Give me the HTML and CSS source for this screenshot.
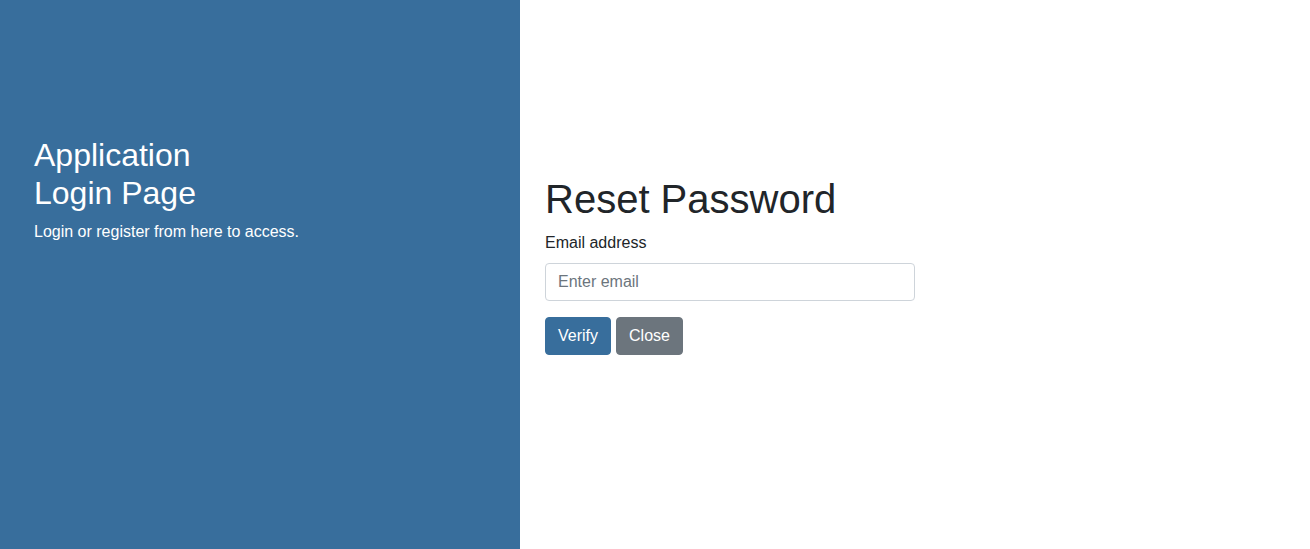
FILE: index.html
```html
<!DOCTYPE html>
<html lang="en">
<head>
<meta charset="utf-8">
<title>Reset Password</title>
<link rel="stylesheet" href="styles.css">
</head>
<body>
<div class="page">
  <aside class="sidenav">
    <div class="main-text">
      <h2>Application<br>Login Page</h2>
      <p>Login or register from here to access.</p>
    </div>
  </aside>
  <main class="main">
    <div class="reset-form">
      <h1>Reset Password</h1>
      <form>
        <div class="form-group">
          <label for="email">Email address</label>
          <input id="email" type="email" class="form-control" placeholder="Enter email">
        </div>
        <div class="actions">
          <button type="button" class="btn btn-primary">Verify</button>
          <button type="button" class="btn btn-secondary">Close</button>
        </div>
      </form>
    </div>
  </main>
</div>
</body>
</html>
```

FILE: styles.css
```css
* { box-sizing: border-box; }
html, body { margin: 0; height: 100%; }
body {
  font-family: "Liberation Sans", Arial, sans-serif;
  font-size: 16px;
  line-height: 1.5;
  color: #212529;
  background: #fff;
}
.page {
  display: flex;
  height: 100%;
}
.sidenav {
  width: 520px;
  flex: 0 0 520px;
  background: #386e9c;
  color: #fff;
}
.main-text {
  padding: 136px 34px 0;
}
.main-text h2 {
  margin: 0 0 7px;
  font-size: 32px;
  font-weight: 400;
  line-height: 1.2;
}
.main-text p {
  margin: 0;
}
.main {
  flex: 1;
  padding: 175px 25px 0;
}
.reset-form h1 {
  margin: 0 0 8px;
  font-size: 40px;
  font-weight: 400;
  line-height: 1.2;
}
.form-group {
  margin-bottom: 16px;
}
.form-group label {
  display: block;
  margin-bottom: 8px;
}
.form-control {
  display: block;
  width: 370px;
  height: 38px;
  padding: 6px 12px;
  font: inherit;
  color: #495057;
  border: 1px solid #ced4da;
  border-radius: 4px;
  background: #fff;
}
.form-control::placeholder { color: #6c757d; opacity: 1; }
.actions {
  display: flex;
  gap: 5px;
}
.btn {
  height: 38px;
  padding: 6px 12px;
  font: inherit;
  color: #fff;
  border: 1px solid transparent;
  border-radius: 4px;
  cursor: pointer;
}
.btn-primary { background: #386e9c; border-color: #386e9c; width: 66px; }
.btn-secondary { background: #6c757d; border-color: #6c757d; width: 67px; }
```
